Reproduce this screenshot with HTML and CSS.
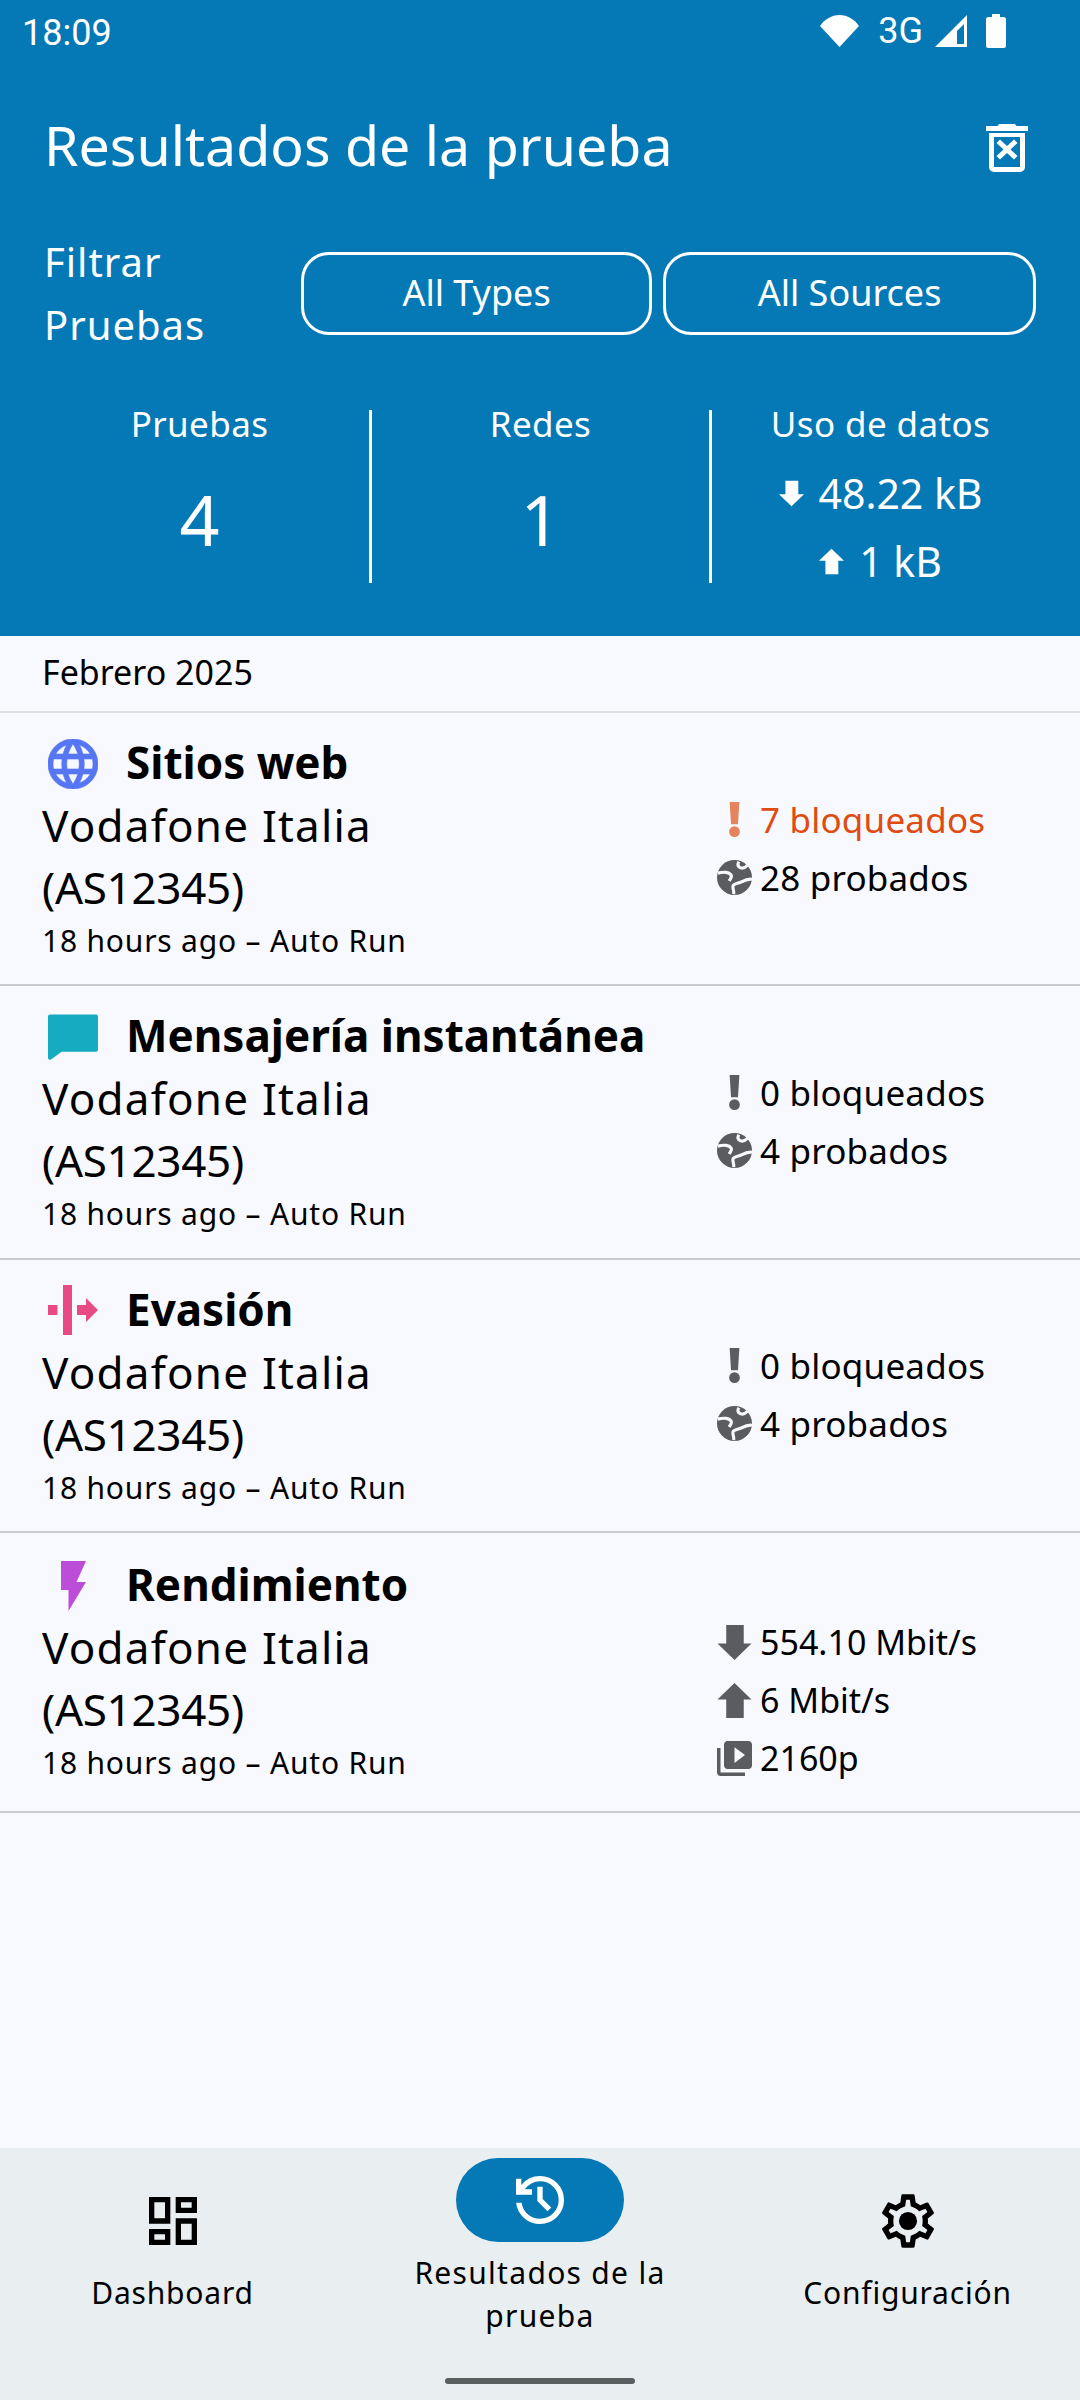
FILE: index.html
```html
<!DOCTYPE html>
<html lang="es">
<head>
<meta charset="utf-8">
<title>Resultados de la prueba</title>
<link rel="stylesheet" href="styles.css">
</head>
<body>
<svg class="defs" width="0" height="0" aria-hidden="true">
  <defs>
    <symbol id="i-bang" viewBox="0 0 35 36"><path d="M12.500 0h10l-1.400 23h-7.200z"/><circle cx="17.500" cy="30.500" r="5.500"/></symbol>
    <symbol id="i-earth" viewBox="2 2 20 20"><circle cx="12" cy="12" r="10"/><path class="earth-land" d="M2.500 9.500C6 8.500 9 9 10 10.500c.8 1.300-.5 2.500-1 3.500M11.500 21.500c.5-2-1-3.500-.2-5 .8-1.300 3-1 4.700-2 1.500-.8 3.500-1.800 6-1.500M14.500 3c-1 1.500-.5 3 1 3.500 1.500.5 2.500 0 4-1.500"/></symbol>
    <symbol id="i-down" viewBox="0 0 35 36"><path d="M9 0h18v19h8L17.500 36 0 19h9z"/></symbol>
    <symbol id="i-up" viewBox="0 0 35 36"><path d="M17.500 0 35 17h-8v19H9V17H0z"/></symbol>
    <symbol id="i-video" viewBox="2 2 20 20"><path d="M4 6H2v14c0 1.100.9 2 2 2h14v-2H4V6zm16-4H8c-1.100 0-2 .9-2 2v12c0 1.100.9 2 2 2h12c1.100 0 2-.9 2-2V4c0-1.100-.9-2-2-2zm-8 12.500v-9l6 4.500-6 4.500z"/></symbol>
  </defs>
</svg>
<div class="screen">
  <header class="hero">
    <div class="statusbar">
      <span class="clock">18:09</span>
      <div class="status-icons">
        <svg class="st-wifi" viewBox="0 0 39 32"><path d="M0 11C5 4 11.500 0 19.500 0S34 4 39 11L19.500 32z"/></svg>
        <span class="st-net">3G</span>
        <svg class="st-signal" viewBox="0 0 32 32"><path fill-rule="evenodd" d="M32 0v32H0zM29 9 22 16v13h7z"/></svg>
        <svg class="st-batt" viewBox="0 0 20 34"><path d="M6 0h8v3h3.500A2.500 2.500 0 0 1 20 5.500V31.500a2.500 2.500 0 0 1-2.500 2.500h-15A2.500 2.500 0 0 1 0 31.500V5.500A2.500 2.500 0 0 1 2.500 3H6z"/></svg>
      </div>
    </div>
    <div class="titlebar">
      <h1 class="title">Resultados de la prueba</h1>
      <svg class="trash" viewBox="0 0 42 48"><path fill-rule="evenodd" d="M13 0h16l1.500 2H42v5H0V2h11.500zM3 9h36v34a5 5 0 0 1-5 5H8a5 5 0 0 1-5-5zM8 13v30h26V13z"/><path d="m14 15.500 7 6.500 7-6.500 3.500 3.500-7 6.500 7 6.500-3.500 3.500-7-6.500-7 6.500-3.500-3.500 7-6.500-7-6.500z"/></svg>
    </div>
    <div class="filters">
      <div class="filters-label">Filtrar<br>Pruebas</div>
      <button class="pick pick-types">All Types</button>
      <button class="pick pick-sources">All Sources</button>
    </div>
    <div class="stats">
      <div class="stat">
        <div class="stat-label">Pruebas</div>
        <div class="stat-num">4</div>
      </div>
      <div class="stat stat-mid">
        <div class="stat-label">Redes</div>
        <div class="stat-num">1</div>
      </div>
      <div class="stat">
        <div class="stat-label">Uso de datos</div>
        <div class="data-lines">
          <div class="data-line"><svg class="data-ic"><use href="#i-down"/></svg><span>48.22 kB</span></div>
          <div class="data-line"><svg class="data-ic"><use href="#i-up"/></svg><span>1 kB</span></div>
        </div>
      </div>
    </div>
  </header>

  <main class="list">
    <div class="month">Febrero 2025</div>

    <article class="row">
      <div class="row-main">
        <div class="row-head">
          <svg class="row-ic ic-web" viewBox="2 2 20 20"><path fill="#5676F4" stroke="#5676F4" stroke-width=".25" d="M11.990 2C6.470 2 2 6.480 2 12s4.470 10 9.990 10C17.520 22 22 17.520 22 12S17.520 2 11.990 2zm6.930 6h-2.950c-.32-1.250-.78-2.450-1.380-3.560 1.840.63 3.370 1.910 4.330 3.560zM12 4.040c.83 1.200 1.480 2.530 1.910 3.960h-3.820c.43-1.430 1.080-2.760 1.910-3.960zM4.260 14C4.100 13.360 4 12.690 4 12s.1-1.360.26-2h3.380c-.08.66-.14 1.320-.14 2 0 .68.06 1.340.14 2H4.260zm.82 2h2.950c.32 1.250.78 2.450 1.380 3.560-1.840-.63-3.370-1.900-4.330-3.560zm2.950-8H5.080c.96-1.660 2.490-2.930 4.330-3.560C8.810 5.550 8.350 6.750 8.030 8zM12 19.960c-.83-1.200-1.480-2.530-1.910-3.960h3.820c-.43 1.430-1.080 2.760-1.910 3.960zM14.340 14H9.660c-.09-.66-.16-1.320-.16-2 0-.68.07-1.350.16-2h4.680c.09.65.16 1.320.16 2 0 .68-.07 1.340-.16 2zm.25 5.560c.6-1.110 1.060-2.310 1.380-3.560h2.950c-.96 1.650-2.490 2.930-4.330 3.560zM16.360 14c.08-.66.14-1.320.14-2 0-.68-.06-1.340-.14-2h3.380c.16.64.26 1.310.26 2s-.1 1.360-.26 2h-3.380z"/></svg>
          <h2 class="row-title">Sitios web</h2>
        </div>
        <div class="row-net"><span class="net-name">Vodafone Italia</span><span class="net-asn">(AS12345)</span></div>
        <div class="row-meta">18 hours ago – Auto Run</div>
      </div>
      <div class="row-side">
        <div class="fact fact-bad"><svg class="fact-ic"><use href="#i-bang"/></svg><span>7 bloqueados</span></div>
        <div class="fact"><svg class="fact-ic"><use href="#i-earth"/></svg><span>28 probados</span></div>
      </div>
    </article>

    <article class="row">
      <div class="row-main">
        <div class="row-head">
          <svg class="row-ic ic-chat" viewBox="0 0 51 46"><path fill="#15ABC0" d="M2 0h47a2 2 0 0 1 2 2v34a2 2 0 0 1-2 2H14L3 46a2 2 0 0 1-3-1.500V2a2 2 0 0 1 2-2z"/></svg>
          <h2 class="row-title">Mensajería instantánea</h2>
        </div>
        <div class="row-net"><span class="net-name">Vodafone Italia</span><span class="net-asn">(AS12345)</span></div>
        <div class="row-meta">18 hours ago – Auto Run</div>
      </div>
      <div class="row-side">
        <div class="fact"><svg class="fact-ic"><use href="#i-bang"/></svg><span>0 bloqueados</span></div>
        <div class="fact"><svg class="fact-ic"><use href="#i-earth"/></svg><span>4 probados</span></div>
      </div>
    </article>

    <article class="row">
      <div class="row-main">
        <div class="row-head">
          <svg class="row-ic ic-evade" viewBox="0 0 50 50"><path fill="#E84A84" d="M15 0h9v50h-9zM0 20h9.500v10H0zM29 20h9v-7l12 12-12 12v-7h-9z"/></svg>
          <h2 class="row-title">Evasión</h2>
        </div>
        <div class="row-net"><span class="net-name">Vodafone Italia</span><span class="net-asn">(AS12345)</span></div>
        <div class="row-meta">18 hours ago – Auto Run</div>
      </div>
      <div class="row-side">
        <div class="fact"><svg class="fact-ic"><use href="#i-bang"/></svg><span>0 bloqueados</span></div>
        <div class="fact"><svg class="fact-ic"><use href="#i-earth"/></svg><span>4 probados</span></div>
      </div>
    </article>

    <article class="row row-tall">
      <div class="row-main">
        <div class="row-head">
          <svg class="row-ic ic-bolt" viewBox="0 0 50 50"><path fill="#BC4DD9" d="M13 0h25l-9.500 21H38L20.500 50V29H13z"/></svg>
          <h2 class="row-title">Rendimiento</h2>
        </div>
        <div class="row-net"><span class="net-name">Vodafone Italia</span><span class="net-asn">(AS12345)</span></div>
        <div class="row-meta">18 hours ago – Auto Run</div>
      </div>
      <div class="row-side">
        <div class="fact"><svg class="fact-ic"><use href="#i-down"/></svg><span>554.10 Mbit/s</span></div>
        <div class="fact"><svg class="fact-ic"><use href="#i-up"/></svg><span>6 Mbit/s</span></div>
        <div class="fact"><svg class="fact-ic"><use href="#i-video"/></svg><span>2160p</span></div>
      </div>
    </article>
  </main>

  <nav class="bottom">
    <div class="tab">
      <svg class="tab-ic" viewBox="0 0 24 24"><path d="M19 5v2h-4V5h4M9 5v6H5V5h4m10 8v6h-4v-6h4M9 17v2H5v-2h4M21 3h-8v6h8V3zM11 3H3v10h8V3zm10 8h-8v10h8V11zm-10 4H3v6h8v-6z"/></svg>
      <span class="tab-label">Dashboard</span>
    </div>
    <div class="tab tab-active">
      <span class="pill"><svg class="pill-ic" viewBox="0 0 24 24"><path d="M12 21q-3.450 0-6.013-2.288T3.050 13H5.100q.35 2.600 2.313 4.300T12 19q2.925 0 4.963-2.038T19 12q0-2.925-2.037-4.962T12 5q-1.725 0-3.225.8T6.250 8H9v2H3V4h2v2.350q1.275-1.600 3.113-2.475T12 3q3.750 0 6.375 2.625T21 12q0 3.750-2.625 6.375T12 21zm2.800-4.800L11 12.400V7h2v4.600l3.200 3.200z"/></svg></span>
      <span class="tab-label">Resultados de la prueba</span>
    </div>
    <div class="tab">
      <svg class="tab-ic" viewBox="0 0 24 24"><path d="M19.430 12.980c.04-.32.07-.64.07-.98s-.03-.66-.07-.98l2.110-1.650c.19-.15.24-.42.12-.64l-2-3.460c-.12-.22-.39-.3-.61-.22l-2.490 1c-.52-.4-1.080-.73-1.690-.98l-.38-2.650C14.460 2.180 14.250 2 14 2h-4c-.25 0-.46.18-.49.42l-.38 2.650c-.61.25-1.170.59-1.690.98l-2.490-1c-.23-.09-.49 0-.61.22l-2 3.460c-.13.22-.07.49.12.64l2.110 1.650c-.04.32-.07.65-.07.98s.03.66.07.98l-2.110 1.650c-.19.15-.24.42-.12.64l2 3.460c.12.22.39.3.61.22l2.490-1c.52.4 1.080.73 1.690.98l.38 2.650c.03.24.24.42.49.42h4c.25 0 .46-.18.49-.42l.38-2.650c.61-.25 1.170-.59 1.690-.98l2.490 1c.23.09.49 0 .61-.22l2-3.460c.12-.22.07-.49-.12-.64l-2.110-1.650zm-1.980-1.710c.04.31.05.52.05.73s-.02.43-.05.73l-.14 1.130.89.7 1.080.84-.7 1.210-1.270-.51-1.040-.42-.9.68c-.43.32-.84.56-1.250.73l-1.060.43-.16 1.130-.2 1.350h-1.400l-.19-1.350-.16-1.130-1.060-.43c-.43-.18-.83-.41-1.230-.71l-.91-.7-1.060.43-1.270.51-.7-1.210 1.080-.84.89-.7-.14-1.130c-.03-.31-.05-.54-.05-.74s.02-.43.05-.73l.14-1.130-.89-.7-1.080-.84.7-1.210 1.270.51 1.040.42.9-.68c.43-.32.84-.56 1.250-.73l1.060-.43.16-1.130.2-1.350h1.390l.19 1.350.16 1.130 1.060.43c.43.18.83.41 1.230.71l.91.7 1.060-.43 1.270-.51.7 1.210-1.070.85-.89.7.14 1.130z"/><circle cx="12" cy="12" r="3.400"/></svg>
      <span class="tab-label">Configuración</span>
    </div>
    <span class="home-bar"></span>
  </nav>
</div>
</body>
</html>
```

FILE: styles.css
```css
* { box-sizing: border-box; }
html, body { margin: 0; padding: 0; }
body { background: #F8F9FF; font-family: "Noto Sans", "Open Sans", sans-serif; color: #000; }
.defs { position: absolute; }
svg { display: block; fill: currentColor; flex: none; }
h1, h2 { margin: 0; }

.screen { width: 1080px; height: 2400px; display: flex; flex-direction: column; overflow: hidden; background: #F8F9FF; }

/* header */
.hero { height: 636px; background: #0579B6; color: #fff; flex: none; display: flex; flex-direction: column; }
.statusbar { height: 66px; display: flex; align-items: center; justify-content: space-between; padding: 0 74px 0 22px; flex: none; }
.clock { font-family: Roboto, sans-serif; font-size: 36px; line-height: 66px; }
.status-icons { display: flex; align-items: center; margin-bottom: 4px; }
.st-wifi { width: 39px; height: 32px; margin-right: 19px; }
.st-net { font-family: Roboto, sans-serif; font-size: 36px; margin-right: 12px; line-height: 40px; }
.st-signal { width: 32px; height: 32px; margin-right: 19px; }
.st-batt { width: 20px; height: 34px; }

.titlebar { display: flex; align-items: center; justify-content: space-between; padding: 0 52px 0 44px; flex: none; height: 164px; }
.title { font-size: 55.5px; line-height: 64px; font-weight: 400; margin-bottom: 6px; }
.trash { width: 42px; height: 48px; }

.filters { display: flex; align-items: center; padding: 0 44px; flex: none; }
.filters-label { width: 257px; font-size: 40px; line-height: 63px; letter-spacing: 1px; flex: none; }
.pick { height: 83px; border: 3px solid #fff; border-radius: 28px; background: transparent; color: #fff; font: inherit; font-size: 36px; padding: 0 0 2px; }
.pick-types { width: 353px; margin-right: 11px; }
.pick-sources { width: 375px; }

.stats { display: grid; grid-template-columns: 339px 343px 337px; padding: 0 30px; margin-top: 54px; flex: none; }
.stat { height: 173px; display: flex; flex-direction: column; align-items: center; }
.stat-mid { border-left: 3px solid #fff; border-right: 3px solid #fff; }
.stat-label { font-size: 35px; line-height: 27px; letter-spacing: .4px; }
.stat-num { font-size: 70px; line-height: 98px; margin-top: 33px; }
.data-lines { margin-top: 22px; display: flex; flex-direction: column; align-items: center; }
.data-line { display: flex; align-items: center; gap: 15px; font-size: 41px; line-height: 68px; }
.data-ic { width: 25px; height: 27px; }

/* list */
.list { flex: 1; display: flex; flex-direction: column; }
.month { height: 77px; padding-left: 42px; font-size: 34px; line-height: 72px; border-bottom: 2px solid #DFE0E5; flex: none; }
.row { height: 273.4px; display: flex; justify-content: space-between; padding: 17px 0 0 42px; border-bottom: 2px solid #C9CAD0; flex: none; }
.row-tall { height: 280px; padding-top: 19px; }
.row-main { display: flex; flex-direction: column; }
.row-head { height: 64px; display: flex; align-items: center; }
.row-ic { width: 50px; height: 50px; margin: 3px 28px 0 6px; }
.row-title { font-size: 44px; line-height: 64px; font-weight: 700; }
.row-net { font-size: 44px; line-height: 62px; }
.net-name { display: block; letter-spacing: 1.2px; }
.net-asn { display: block; letter-spacing: -.3px; }
.row-meta { font-size: 30px; line-height: 46px; letter-spacing: .8px; }
.row-side { width: 363px; padding-top: 60px; flex: none; }
.row-tall .row-side { padding-top: 61px; }
.fact { height: 58px; display: flex; align-items: center; font-size: 35px; letter-spacing: .2px; }
.fact .fact-ic { width: 35px; height: 35px; margin-right: 8px; color: #5A5C5F; }
.fact-bad { color: #DF4B10; }
.fact-bad .fact-ic { color: #E5835D; }
.earth-land { fill: none; stroke: #F8F9FF; stroke-width: 1.8; }
.row-tall .fact { font-size: 34px; letter-spacing: 0; }

/* nav */
.bottom { position: relative; height: 252px; background: #E9EEF1; flex: none; display: grid; grid-template-columns: 345px 390px 345px; }
.tab { display: flex; flex-direction: column; align-items: center; padding-top: 41px; }
.tab-ic { width: 64px; height: 64px; }
.tab-label { font-size: 30px; line-height: 46px; text-align: center; margin-top: 17px; letter-spacing: .8px; }
.tab-active { padding-top: 10px; }
.tab-active .tab-label { width: 300px; margin-top: 9px; line-height: 43px; letter-spacing: 1.3px; }
.pill { width: 168px; height: 84px; border-radius: 42px; background: #0579B6; color: #fff; display: flex; align-items: center; justify-content: center; }
.pill-ic { width: 64px; height: 64px; }
.home-bar { position: absolute; left: 445px; top: 230px; width: 190px; height: 6px; border-radius: 3px; background: #5B5F60; }
```
